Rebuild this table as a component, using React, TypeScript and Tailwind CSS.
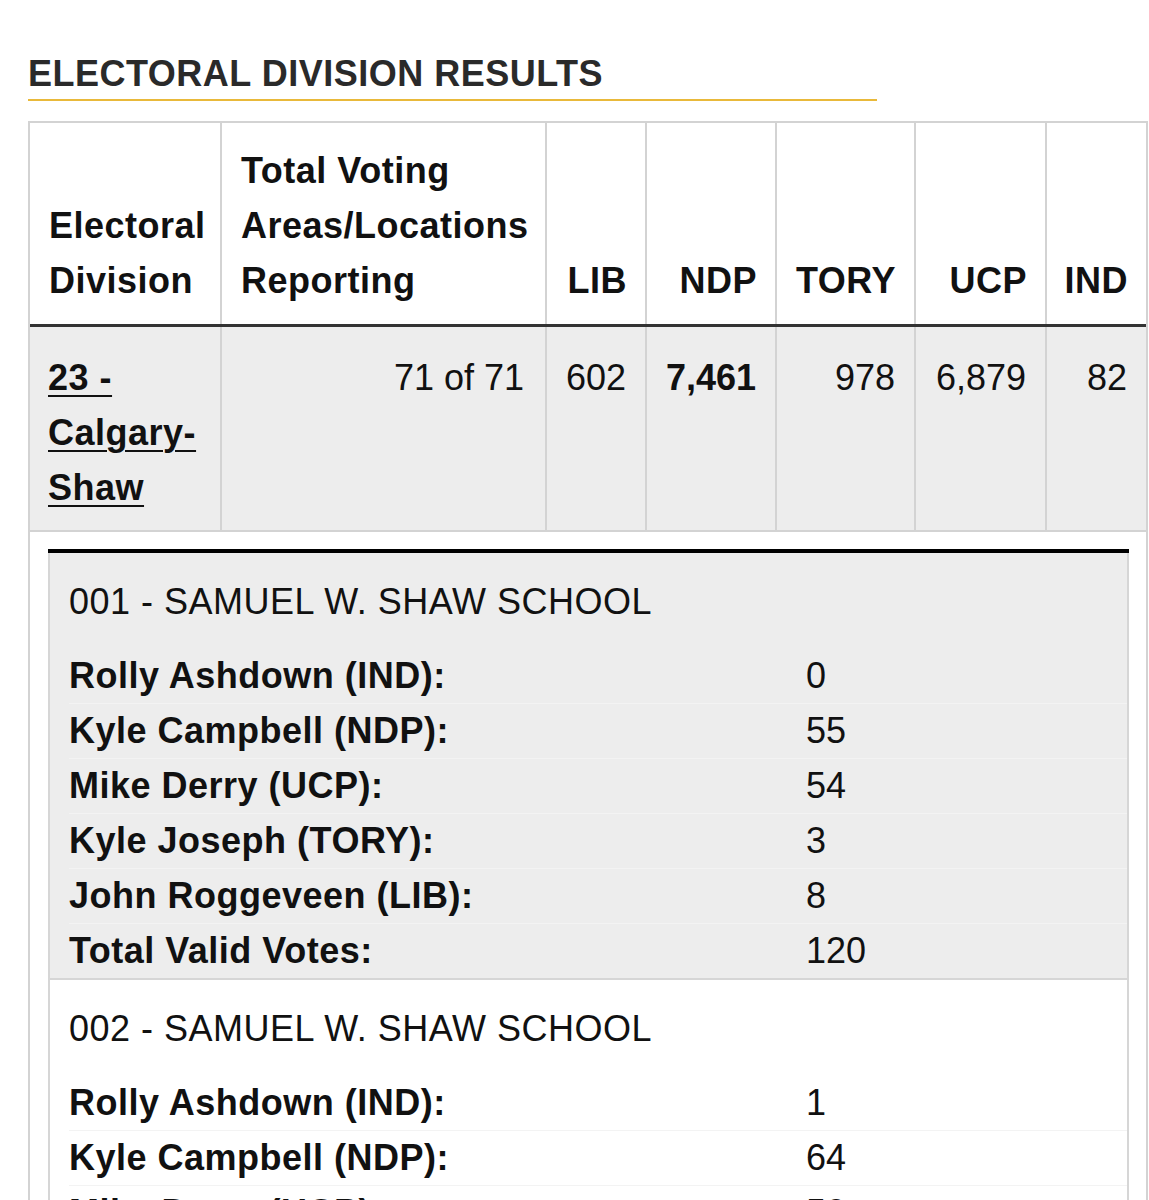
import React from "react"

const headers = [
  { lines: ["Electoral", "Division"], left: true },
  { lines: ["Total Voting", "Areas/Locations", "Reporting"], left: true },
  { lines: ["LIB"] },
  { lines: ["NDP"] },
  { lines: ["TORY"] },
  { lines: ["UCP"] },
  { lines: ["IND"] },
]

const totals = [
  { v: "71 of 71" },
  { v: "602" },
  { v: "7,461", bold: true },
  { v: "978" },
  { v: "6,879" },
  { v: "82" },
]

const locations = [
  {
    name: "001 - SAMUEL W. SHAW SCHOOL",
    shade: true,
    rows: [
      ["Rolly Ashdown (IND):", "0"],
      ["Kyle Campbell (NDP):", "55"],
      ["Mike Derry (UCP):", "54"],
      ["Kyle Joseph (TORY):", "3"],
      ["John Roggeveen (LIB):", "8"],
      ["Total Valid Votes:", "120"],
    ],
  },
  {
    name: "002 - SAMUEL W. SHAW SCHOOL",
    shade: false,
    rows: [
      ["Rolly Ashdown (IND):", "1"],
      ["Kyle Campbell (NDP):", "64"],
      ["Mike Derry (UCP):", "50"],
      ["Kyle Joseph (TORY):", "2"],
    ],
  },
]

export default function App() {
  return (
    <div className="bg-white h-[1200px] overflow-hidden pl-[28px] pt-[54px] text-[36px] text-[#111] font-['Liberation_Sans',Arial,sans-serif]">
      {/* Title */}
      <div className="w-[849px] border-b-2 border-[#e9b93a] pb-[5px]">
        <h1 className="font-bold leading-[40px] tracking-[0.5px] text-[#2a2a2a]">ELECTORAL DIVISION RESULTS</h1>
      </div>

      {/* Table */}
      <div className="mt-[20px] w-[1120px] border-t-2 border-l-2 border-r-2 border-[#d3d3d3]">
        <div className="grid grid-cols-[192px_325px_100px_130px_139px_131px_1fr] border-b-[3px] border-[#333]">
          {headers.map((h, i) => (
            <div
              key={i}
              className={
                "flex flex-col justify-end pt-[20px] pb-[16px] font-bold leading-[55px] tracking-[0.5px] " +
                (i < 6 ? "border-r-2 border-[#d3d3d3] " : "") +
                (h.left ? "pl-[19px] text-left" : "pr-[18px] text-right")
              }
            >
              {h.lines.map((l) => (
                <div key={l}>{l}</div>
              ))}
            </div>
          ))}
        </div>

        <div className="grid grid-cols-[192px_325px_100px_130px_139px_131px_1fr] bg-[#ededed] border-b-2 border-[#d3d3d3]">
          <div className="border-r-2 border-[#d3d3d3] pl-[18px] pt-[23px] pb-[15px] leading-[55px] font-bold tracking-[0.5px]">
            <a href="#" className="underline decoration-2 underline-offset-[5px] text-[#111]">
              23 -<br />Calgary-<br />Shaw
            </a>
          </div>
          {totals.map((t, i) => (
            <div
              key={i}
              className={
                "pt-[23px] pb-[15px] pr-[19px] text-right leading-[55px] " +
                (i === 0 ? "pr-[21px] " : "") +
                (i < 5 ? "border-r-2 border-[#d3d3d3] " : "") +
                (t.bold ? "font-bold" : "")
              }
            >
              {t.v}
            </div>
          ))}
        </div>

        {/* Voting location details */}
        <div className="pt-[17px] pl-[18px] pr-[17px]">
          <div className="border-t-4 border-black">
            {locations.map((loc) => (
              <div
                key={loc.name}
                className={
                  "border-l-2 border-r-2 border-b-2 border-[#d6d6d6] pl-[19px] pt-[21px] " +
                  (loc.shade ? "bg-[#ededed]" : "bg-white")
                }
              >
                <div className="leading-[55px] mb-[19px] tracking-[0.5px]">{loc.name}</div>
                {loc.rows.map(([label, val], j) => (
                  <div
                    key={label}
                    className={
                      "grid grid-cols-[737px_1fr] leading-[55px] " +
                      (j > 0 ? "shadow-[inset_0_1px_0_#f3f3f3]" : "")
                    }
                  >
                    <div className="font-bold tracking-[0.5px]">{label}</div>
                    <div>{val}</div>
                  </div>
                ))}
              </div>
            ))}
          </div>
        </div>
      </div>
    </div>
  )
}
